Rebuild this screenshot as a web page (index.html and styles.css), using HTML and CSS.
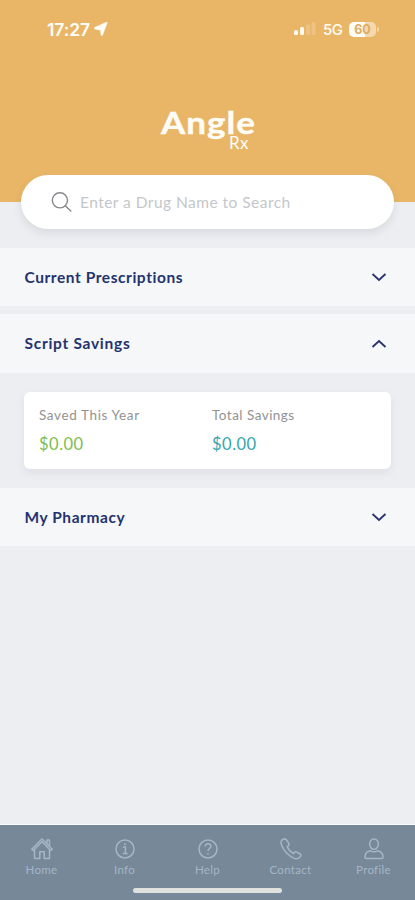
FILE: index.html
```html
<!DOCTYPE html>
<html lang="en">
<head>
<meta charset="utf-8">
<title>Angle Rx</title>
<link rel="stylesheet" href="styles.css">
</head>
<body>
<div class="app">
  <header class="header">
    <div class="status">
      <div class="status-left">
        <span class="time">17:27</span>
        <svg class="location" width="14" height="14" viewBox="0 0 14 14"><path d="M13.200.6 8.500 13.200c-.3.6-1.300.5-1.400-.2L6.500 8.200 1 7C.2 6.800.1 5.700.8 5.400L12.500.2c.6-.2.9 0 .7.400z"/></svg>
      </div>
      <div class="status-right">
        <svg width="22" height="14" viewBox="0 0 22 14" fill="#fffaf0"><rect x="0" y="8" width="4" height="5" rx="1.500"/><rect x="6" y="5" width="4" height="8" rx="1.500"/><rect x="12" y="2.500" width="4" height="10.500" rx="1.500" opacity=".2"/><rect x="17.500" y="0" width="4" height="13" rx="1.500" opacity=".2"/></svg>
        <span class="network">5G</span>
        <span class="battery">60</span><span class="battery-tip"></span>
      </div>
    </div>
    <div class="logo"><span class="logo-name">Angle</span><span class="logo-sub">Rx</span></div>
  </header>
  <div class="search">
    <svg width="22" height="22" viewBox="0 0 22 22" fill="none" stroke="#85878a" stroke-width="1.400" stroke-linecap="round"><circle cx="8.900" cy="9.300" r="7.600"/><path d="m14.500 15 5.300 5"/></svg>
    <span class="placeholder">Enter a Drug Name to Search</span>
  </div>
  <main>
    <section class="row row-first"><h2>Current Prescriptions</h2><svg class="chevron" viewBox="0 0 16 10"><path d="m1.500 2 6.500 6 6.500-6"/></svg></section>
    <section class="row row-open"><h2 class="open-title">Script Savings</h2><svg class="chevron" viewBox="0 0 16 10"><path d="m1.500 8 6.500-6 6.500 6"/></svg></section>
    <div class="card">
      <div class="stat"><span class="label label-year">Saved This Year</span><span class="amount green">$0.00</span></div>
      <div class="stat"><span class="label">Total Savings</span><span class="amount teal">$0.00</span></div>
    </div>
    <section class="row"><h2>My Pharmacy</h2><svg class="chevron" viewBox="0 0 16 10"><path d="m1.500 2 6.500 6 6.500-6"/></svg></section>
  </main>
  <nav class="nav">
    <div class="tabs">
      <div class="tab"><svg viewBox="0 0 24 24"><path d="M4.500 12v9.500h5.300v-6.800h4.400v6.800h5.300V12M1.800 12.300 12 2l10.200 10.300-1.600 1.200L12 4.800l-8.600 8.700zM17 7V3h2.500v6.500"/></svg><span>Home</span></div>
      <div class="tab"><svg viewBox="0 0 24 24"><circle cx="12" cy="12" r="9"/><path d="M10 10h2.400v6.500M9.800 16.500h5M12 6.300v1.800"/></svg><span>Info</span></div>
      <div class="tab"><svg viewBox="0 0 24 24"><circle cx="12" cy="12" r="9"/><path d="M9.200 9.500c0-3.600 5.700-3.500 5.700-.2 0 2.200-2.900 2.300-2.900 4.700M12 16v1.400"/></svg><span>Help</span></div>
      <div class="tab"><svg viewBox="0 0 24 24"><path d="M4.200 2.300C2 3.300 1.500 5.300 2.400 7.800c2.300 6 6.400 10.500 12.200 13.300 2.600 1.100 5.300.7 7.100-2 .5-.8.300-1.600-.5-2.100l-3.700-2.100c-.8-.4-1.500-.3-2 .4l-1 1.200c-3-1.500-5-3.700-6.200-6.800l1.200-1c.7-.6.8-1.200.4-2L7.600 3c-.8-1.300-1.800-1.500-3.400-.7z"/></svg><span>Contact</span></div>
      <div class="tab"><svg viewBox="0 0 24 24"><path d="M12 2c-6.200 0-5.200 10.300 0 10.300S18.200 2 12 2zM8.500 13.800C5 14.500 3 16.500 2.900 20c0 1 .5 1.500 1.500 1.500h15.200c1 0 1.500-.5 1.500-1.500-.1-3.500-2.100-5.500-5.600-6.200-2.200 1.200-4.800 1.200-7 0z"/></svg><span>Profile</span></div>
    </div>
    <div class="home-indicator"></div>
  </nav>
</div>
</body>
</html>
```
FILE: styles.css
```css
* { box-sizing: border-box; }
body { margin: 0; font-family: Lato, "Liberation Sans", sans-serif; }
.app { width: 415px; height: 900px; display: flex; flex-direction: column; background: #edeef2; overflow: hidden; }
.header { height: 202px; flex: none; background: #e9b668; color: #fffdf8; }
.status { height: 58px; display: flex; justify-content: space-between; padding: 0 36px 0 47px; font-family: Inter, sans-serif; }
.status-left, .status-right { display: flex; align-items: center; }
.time { font-size: 17.500px; font-weight: 600; letter-spacing: -.1px; }
.location { margin-left: 4px; fill: #fffdf8; stroke: #fffdf8; stroke-width: .6; }
.network { margin-left: 7px; font-size: 15px; font-weight: 500; letter-spacing: -.4px; width: 19px; }
.battery { margin-left: 7px; width: 27px; height: 15px; border-radius: 5px; background: linear-gradient(90deg, #fffdf8 60%, #f4d9ae 60%); color: #dfac60; font-size: 12.500px; line-height: 15px; font-weight: 700; text-align: center; }
.battery-tip { width: 2px; height: 5px; margin-left: 1px; border-radius: 0 2px 2px 0; background: #f4d9ae; }
.logo { width: 95px; margin: 49px auto 0 161px; display: flex; flex-direction: column; }
.logo-name { font-size: 31px; line-height: 30px; font-weight: 700; letter-spacing: .9px; transform: scaleX(1.13); transform-origin: left; -webkit-text-stroke: .4px #fffdf8; }
.logo-sub { align-self: flex-end; margin: -2px 7px 0 0; font-size: 17px; line-height: 16px; letter-spacing: .5px; }
.search { flex: none; width: 373px; height: 54px; margin: -27px 0 0 21px; padding-left: 30px; display: flex; align-items: center; border-radius: 27px; background: #fff; box-shadow: 0 4px 9px rgba(60, 70, 90, .12); }
.placeholder { margin-left: 7px; font-size: 15.500px; letter-spacing: .47px; color: #c3c7cb; }
main { flex: 1; padding-top: 19px; }
.row { height: 58px; padding: 0 28px 0 24.500px; display: flex; align-items: center; justify-content: space-between; background: #f6f7f9; }
.row-first { margin-bottom: 8px; }
.row-open { height: 59px; }
h2 { margin: 0; color: #24336e; font-size: 15.500px; line-height: 18px; font-weight: 700; letter-spacing: .56px; }
.open-title { padding-bottom: 1px; letter-spacing: .72px; }
.chevron { width: 16px; height: 10px; fill: none; stroke: #29326d; stroke-width: 1.800; }
.card { width: 367px; height: 77px; margin: 19px 0 19px 24px; padding: 14px 15px; display: grid; grid-template-columns: 173px 1fr; border-radius: 6px; background: #fff; box-shadow: 0 4px 9px rgba(60, 70, 90, .08); }
.stat { display: flex; flex-direction: column; }
.label { font-size: 13.500px; line-height: 18px; color: #929292; letter-spacing: .48px; }
.label-year { letter-spacing: .62px; }
.amount { margin-top: 9px; font-size: 16.500px; line-height: 22px; letter-spacing: .5px; }
.green { color: #7ebd50; }
.teal { color: #35a6ad; }
.nav { flex: none; height: 76px; border-top: 1px solid #f8fcff; background: #778899; color: #a5b6c8; }
.tabs { height: 63px; padding-top: 12px; display: grid; grid-template-columns: repeat(5, 83px); }
.tab { display: flex; flex-direction: column; align-items: center; font-size: 11.500px; line-height: 14px; letter-spacing: .3px; }
.tab svg { width: 24px; height: 24px; margin-bottom: 2px; fill: none; stroke: #a5b6c8; stroke-width: 1.500; stroke-linejoin: round; }
.home-indicator { width: 149px; height: 5px; margin-left: 133px; border-radius: 3px; background: #dfe1df; }
```
